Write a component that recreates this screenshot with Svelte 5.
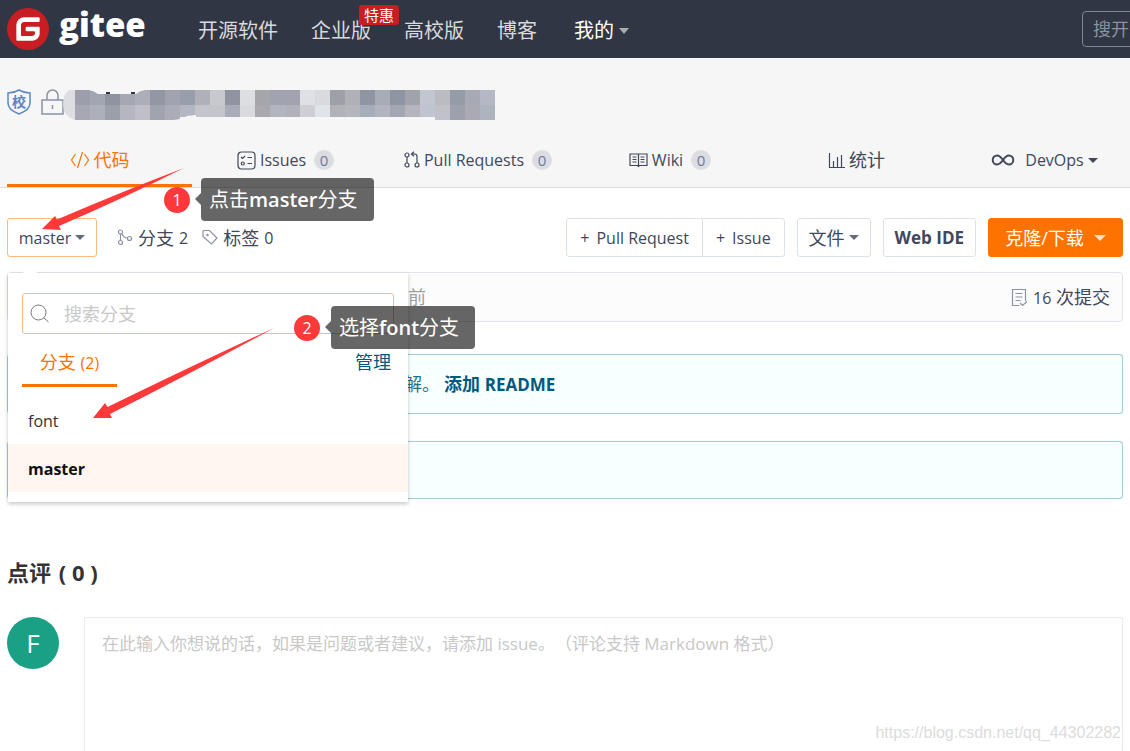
<script lang="ts">
  let branch = $state('master');
  let keyword = $state('');
  let comment = $state('');

  const branches = ['font', 'master'];

  const tabs = [
    { icon: 'code', label: '代码', active: true },
    { icon: 'issues', label: 'Issues', latin: true, count: 0 },
    { icon: 'pulls', label: 'Pull Requests', latin: true, count: 0 },
    { icon: 'wiki', label: 'Wiki', latin: true, count: 0 },
    { icon: 'stats', label: '统计' },
    { icon: 'devops', label: 'DevOps', latin: true, caret: true },
  ];

  // colours of the hidden repository name, one per 15px block
  const mosaic = [
    ['#9c9fab', '#a2a6b2', '#9094a0', '#a5a8b2', '#acaeb8', '#9297a3', '#a1a4af', '#989eab', '#b0b1b8', '#c8c9cf', '#9094a1', '#dddee2', '#a5a6aa', '#a1a4b0', '#a1a4b0', '#dfe0e6', '#d8dadd', '#9da1a7', '#b0b1b7', '#8f95a3', '#a8acb7', '#9095a4', '#a0a3aa', '#c2c6d0', '#babcc1', '#969ba8', '#a7aab4', '#b4b8c4'],
    ['#a6a8b4', '#adafba', '#9b9faa', '#b6b6be', '#c0bfc8', '#a0a4af', '#aaadb8', '#b3b7c2', '#c4c4cc', '#c4c4cb', '#a9acb8', '#d9dade', '#a9a8ad', '#b2b4c0', '#b0b1b9', '#cfced5', '#dfe4e8', '#b0b2b8', '#b5b6bd', '#a6aeb9', '#b2b4bf', '#a3a6b3', '#b6b5bd', '#bfc4d0', '#c0c1c9', '#9da1ad', '#aba9b2', '#adb4c0'],
  ];
</script>

{#snippet icon(name: string)}
  {#if name === 'code'}
    <svg class="icon" width="20" height="18" viewBox="0 0 20 18">
      <path d="M5.500 3 1.500 9l4 6M14.500 3l4 6-4 6M12.500 1 7.500 17" />
    </svg>
  {:else if name === 'issues'}
    <svg class="icon" width="19" height="19" viewBox="0 0 19 19">
      <rect x="1" y="1" width="17" height="17" rx="3.500" />
      <path d="M4 6l1.500 1.500L8 5M10.500 6.500h4.500M10.500 12.500h4.500" />
      <circle cx="5.800" cy="12.500" r="1.500" />
    </svg>
  {:else if name === 'pulls'}
    <svg class="icon" width="16" height="18" viewBox="0 0 16 18">
      <circle cx="3" cy="4" r="2" />
      <circle cx="3" cy="14" r="2" />
      <circle cx="13" cy="14" r="2" />
      <path d="M3 6v6M13 12V5.500Q13 3 10.500 3H8M10 .8 7.500 3 10 5.200" />
    </svg>
  {:else if name === 'wiki'}
    <svg class="icon" width="19" height="16" viewBox="0 0 19 16">
      <path d="M1 2h17v11.500h-7.500l-1 1-1-1H1zM9.500 2v12M3.500 5h4M3.500 7.500h4M3.500 10h4M11.500 5h4M11.500 7.500h4M11.500 10h4" />
    </svg>
  {:else if name === 'stats'}
    <svg class="icon" width="17" height="17" viewBox="0 0 17 17">
      <path d="M1.500 1v14.500H17M5.500 15V9M9.500 15V5M13.500 15V3" />
    </svg>
  {:else if name === 'devops'}
    <svg class="icon thick" width="24" height="14" viewBox="0 0 24 14">
      <path d="M12 7C9.500 3.500 8.500 2.500 6.200 2.500a4.500 4.500 0 0 0 0 9C8.500 11.500 9.500 10.500 12 7s3.500-4.500 5.800-4.500a4.500 4.500 0 0 1 0 9C15.500 11.500 14.500 10.500 12 7z" />
    </svg>
  {:else if name === 'branch'}
    <svg class="icon" width="16" height="17" viewBox="0 0 16 17">
      <circle cx="3.500" cy="3" r="2" />
      <circle cx="3.500" cy="13.500" r="2" />
      <circle cx="12.500" cy="9.500" r="2" />
      <path d="M3.500 5v6.500M4.800 4.700C6 7.500 8 8.800 10.500 9.200" />
    </svg>
  {:else if name === 'tag'}
    <svg class="icon" width="16" height="17" viewBox="0 0 16 17">
      <path d="M1 2.500Q1 1.500 2 1.500h5.500L15 9l-5.500 6L1 7.500z" />
      <circle cx="5.500" cy="6" r=".6" />
    </svg>
  {:else if name === 'commits'}
    <svg class="icon" width="17" height="19" viewBox="0 0 17 19">
      <path d="M8.500 17.500H1.500V1.500h13v11.500M4.500 5.500h7M4.500 9h7M4.500 12.500h5M9 15l2.500 2.500 4.500-4" />
    </svg>
  {/if}
{/snippet}

<div class="page">
  <header class="topbar">
    <a class="logo" href="/" aria-label="gitee">
      <svg width="42" height="42" viewBox="0 0 24 24">
        <circle cx="12" cy="12" r="12" fill="#c71d23" />
        <path
          fill="#fff"
          d="M18.074 5.333c.328 0 .593.266.592.593v1.482a.594.594 0 0 1-.593.592H9.777c-.982 0-1.778.796-1.778 1.778v5.630c0 .327.266.592.593.592h5.630c.982 0 1.778-.796 1.778-1.778v-.296a.593.593 0 0 0-.592-.593h-4.150a.592.592 0 0 1-.592-.592v-1.482a.593.593 0 0 1 .593-.592h6.815c.327 0 .593.265.593.592v3.408a4 4 0 0 1-4 4H5.926a.593.593 0 0 1-.593-.593V9.778a4.444 4.444 0 0 1 4.445-4.444h8.296Z" />
      </svg>
      <span>gitee</span>
    </a>
    <nav class="menu">
      <a href="/explore">开源软件</a>
      <a href="/enterprises">企业版<em>特惠</em></a>
      <a href="/education">高校版</a>
      <a href="/blog">博客</a>
      <a class="mine" href="/mine">我的<i class="caret"></i></a>
    </nav>
    <input class="site-search" type="text" placeholder="搜开源" aria-label="搜开源" />
  </header>

  <section class="project">
    <div class="title">
      <svg width="24" height="26" viewBox="0 0 24 26">
        <path d="M12 1 Q17 4 23 4v10c0 5-4.500 8.500-11 11C5.500 22.500 1 19 1 14V4Q7 4 12 1z" fill="none" stroke="#5f86c4" stroke-width="1.500" />
        <text x="12" y="18" text-anchor="middle">校</text>
      </svg>
      <svg class="lock" width="23" height="26" viewBox="0 0 23 26">
        <path d="M1 11h21v14H1zM6 11V6.500a5.500 5.500 0 0 1 11 0V11M11.500 16v4" fill="none" stroke="#8c92a4" stroke-width="1.500" />
      </svg>
      <svg class="mosaic" width="432" height="30" viewBox="0 0 432 30">
        <path d="M12 0H6Q0 4 0 15t12 15z" fill="#dddee1" />
        {#each mosaic as row, y}
          {#each row as fill, x}
            <rect
              x={12 + x * 15}
              y={y * 15}
              width="15"
              height={y === 1 && x > 6 && x < 24 ? 12 : 15}
              {fill} />
          {/each}
        {/each}
        <path d="M26 0h56q-6 1-9 4H35q-4-3-9-4z" fill="#f6f6f6" />
        <path d="M43 2h4v2h-4zM68 2h4v2h-4z" fill="#303643" />
        <path d="M110 30q10-1 14-4l9-1v5z" fill="#f6f6f6" />
      </svg>
    </div>
    <nav class="tabs">
      {#each tabs as tab}
        <a class:active={tab.active} class:shifted={tab.caret} href="#{tab.icon}">
          {@render icon(tab.icon)}
          <span class:latin={tab.latin}>{tab.label}</span>
          {#if tab.count !== undefined}<b class="count">{tab.count}</b>{/if}
          {#if tab.caret}<i class="caret"></i>{/if}
        </a>
      {/each}
    </nav>
  </section>

  <main>
    <div class="toolbar">
      <div class="picker">
        <button class="btn current latin">{branch}<i class="caret"></i></button>
        <div class="dropdown">
          <label class="search">
            <svg width="20" height="20" viewBox="0 0 20 20" fill="none" stroke="#777">
              <circle cx="8.500" cy="8.500" r="7.500" />
              <path d="M14 14l4.500 4" />
            </svg>
            <input type="text" placeholder="搜索分支" aria-label="搜索分支" bind:value={keyword} />
          </label>
          <div class="dropdown-head">
            <a class="branches" href="#branches">分支 <span class="latin">(2)</span></a>
            <a class="manage" href="#manage">管理</a>
          </div>
          {#each branches as name}
            <button class="option" class:selected={name === branch} onclick={() => (branch = name)}>{name}</button>
          {/each}
        </div>
      </div>
      <a class="stat" href="#branches">{@render icon('branch')}分支 <span class="latin">2</span></a>
      <a class="stat" href="#tags">{@render icon('tag')}标签 <span class="latin">0</span></a>
      <div class="actions">
        <div class="group">
          <button class="btn latin pull"><span>+</span>Pull Request</button>
          <button class="btn latin"><span>+</span>Issue</button>
        </div>
        <button class="btn">文件<i class="caret"></i></button>
        <button class="btn ide">Web IDE</button>
        <button class="btn clone">克隆/下载<i class="caret"></i></button>
      </div>
    </div>

    <div class="commit">
      <span class="time">前</span>
      <a href="#commits">{@render icon('commits')}<span><span class="latin">16</span> 次提交</span></a>
    </div>

    <div class="notice">解。<a href="#readme">添加 <span>README</span></a></div>
    <div class="notice"></div>

    <h3>点评 <span>( 0 )</span></h3>
    <div class="comment">
      <span class="avatar">F</span>
      <div class="editor">
        <textarea
          rows="5"
          aria-label="点评"
          placeholder="在此输入你想说的话，如果是问题或者建议，请添加 issue。（评论支持 Markdown 格式）"
          bind:value={comment}></textarea>
        <span class="watermark">https://blog.csdn.net/qq_44302282</span>
      </div>
    </div>
  </main>

  <!-- walkthrough notes on top of the page -->
  <svg class="arrows" width="300" height="430" viewBox="0 0 300 430">
    <path d="M42 229 55 216 57 219.500Q126 190 184 168 122 199 59 226L61 230z" />
    <path d="M93 418 105 403 107.500 407Q196 364 274 328 190 374 110 414L112 418z" />
  </svg>
  <div class="note first"><b>1</b><p>点击<strong>master</strong>分支</p></div>
  <div class="note second"><b>2</b><p>选择<strong>font</strong>分支</p></div>
</div>

<style>
  :global(body) {
    margin: 0;
    overflow-x: hidden;
  }

  .page {
    position: relative;
    overflow: hidden;
    color: #40485b;
    background: #fff;
    font: 18px/24px "Open Sans", "Noto Sans CJK SC", sans-serif;
  }

  .page *,
  .page {
    box-sizing: border-box;
  }

  a {
    color: inherit;
    text-decoration: none;
  }

  button,
  input,
  textarea {
    font: inherit;
    color: inherit;
  }

  .latin {
    font-size: 16px;
  }

  .icon {
    flex: none;
    fill: none;
    stroke: currentColor;
    stroke-width: 1.2;
  }

  .icon.thick {
    stroke-width: 2;
  }

  .caret {
    display: inline-block;
    flex: none;
    border: 5px solid transparent;
    border-top-color: currentColor;
    border-bottom: 0;
  }

  .topbar {
    display: flex;
    align-items: center;
    height: 58px;
    padding-left: 7px;
    overflow: hidden;
    background: #303643;
  }

  .logo {
    display: flex;
    align-items: center;
    gap: 10px;
    width: 191px;
    color: #fff;
    font-size: 33px;
    font-weight: 800;
    line-height: 42px;
  }

  .logo span {
    padding-bottom: 8px;
  }

  .menu {
    display: flex;
    gap: 33px;
    padding-top: 3px;
    color: #d8dade;
    font-size: 20px;
    line-height: 32px;
    white-space: nowrap;
  }

  .menu a {
    position: relative;
  }

  .menu em {
    position: absolute;
    top: -10px;
    left: 48px;
    padding: 0 5px;
    border-radius: 3px;
    background: #c71d23;
    color: #fff;
    font-size: 15px;
    font-style: normal;
    line-height: 20px;
  }

  .menu .mine {
    display: flex;
    align-items: center;
    gap: 5px;
    margin-left: 4px;
    color: #fff;
  }

  .mine .caret {
    border-width: 6px 5px 0;
    color: #a9acb3;
  }

  .site-search {
    flex: none;
    width: 168px;
    height: 36px;
    margin: 0 -120px 0 auto;
    padding: 0 10px;
    border: 1px solid #7f8697;
    border-radius: 4px;
    background: transparent;
  }

  .site-search::placeholder {
    color: #8c929e;
    opacity: 1;
  }

  .project {
    padding: 30px 7px 0;
    border-bottom: 1px solid #dcdddf;
    background: #f6f6f6;
  }

  .title {
    display: flex;
    align-items: center;
    height: 28px;
  }

  .title text {
    fill: #5f86c4;
    font-size: 14px;
    font-weight: 700;
  }

  .lock {
    margin-left: 10px;
  }

  .mosaic {
    margin-top: 6px;
    margin-left: -1px;
  }

  .tabs {
    display: grid;
    grid-template-columns: 185fr 187fr 198fr 186fr 187fr 173fr;
    margin-top: 18px;
  }

  .tabs a {
    display: flex;
    align-items: center;
    justify-content: center;
    gap: 4px;
    height: 53px;
    padding-top: 2px;
    border-bottom: 3px solid transparent;
    white-space: nowrap;
  }

  .tabs .active {
    border-color: #fe7300;
    color: #fe7300;
  }

  .tabs .shifted {
    padding-left: 16px;
  }

  .shifted .icon {
    margin-right: 6px;
  }

  .count {
    min-width: 20px;
    margin-left: 4px;
    border-radius: 10px;
    background: #dcdde0;
    color: #6c7aa0;
    font-size: 15px;
    font-weight: 400;
    line-height: 20px;
    text-align: center;
  }

  main {
    padding: 30px 7px 0;
  }

  .toolbar {
    display: flex;
    align-items: center;
    white-space: nowrap;
  }

  .picker {
    position: relative;
    margin-right: 20px;
  }

  .btn {
    display: flex;
    align-items: center;
    justify-content: center;
    gap: 4px;
    height: 39px;
    padding: 0 11px;
    border: 1px solid #dce3e8;
    border-radius: 3px;
    background: #fff;
  }

  .btn .caret {
    color: #646b7c;
  }

  .current {
    width: 90px;
    padding: 0;
    border-color: #ffb980;
  }

  .stat {
    display: flex;
    align-items: center;
    gap: 5px;
    margin-right: 14px;
  }

  .stat .icon,
  .commit .icon {
    color: #8c92a4;
  }

  .actions {
    display: flex;
    gap: 12px;
    margin-left: auto;
  }

  .group {
    display: flex;
  }

  .group .btn {
    gap: 7px;
    padding: 0 13px;
    border-radius: 0 3px 3px 0;
  }

  .group .pull {
    margin-right: -1px;
    border-radius: 3px 0 0 3px;
  }

  .ide {
    font-size: 17px;
    font-weight: 700;
  }

  .clone {
    gap: 10px;
    width: 135px;
    border-color: #fe7300;
    background: #fe7300;
    color: #fff;
  }

  .clone .caret {
    border-width: 6px;
    border-bottom: 0;
    color: #ffe0c4;
  }

  .dropdown {
    position: absolute;
    z-index: 1;
    top: 55px;
    left: 1px;
    width: 400px;
    padding: 20px 0 10px;
    background: #fff;
    box-shadow: 0 2px 4px rgba(34, 36, 38, 0.25);
  }

  .dropdown::before {
    content: '';
    position: absolute;
    top: -5px;
    left: 17px;
    width: 10px;
    height: 10px;
    background: #fff;
    transform: rotate(45deg);
  }

  .search {
    display: flex;
    align-items: center;
    height: 41px;
    margin: 0 14px;
    padding-left: 7px;
    border: 1px solid #ffb980;
    border-radius: 3px;
  }

  .search input {
    flex: 1;
    min-width: 0;
    margin-left: 14px;
    padding: 0;
    border: 0;
    outline: 0;
    background: none;
  }

  .search input::placeholder,
  textarea::placeholder {
    color: #c8c8c8;
    opacity: 1;
  }

  .dropdown-head {
    display: flex;
    justify-content: space-between;
    height: 53px;
    margin: 0 14px 9px;
  }

  .branches {
    width: 95px;
    padding-top: 16px;
    border-bottom: 3px solid #fe7300;
    color: #fe7300;
    text-align: center;
  }

  .manage {
    padding: 16px 3px 0;
    color: #005980;
  }

  .option {
    display: block;
    width: 100%;
    height: 48px;
    padding: 2px 20px 0;
    border: 0;
    background: #fff;
    color: #333;
    font-size: 16px;
    text-align: left;
  }

  .selected {
    background: #fff6f1;
    color: #111;
    font-weight: 700;
  }

  .commit {
    display: flex;
    align-items: center;
    justify-content: space-between;
    height: 50px;
    margin-top: 15px;
    padding: 0 12px 0 400px;
    border: 1px solid #dfe5ea;
    border-radius: 4px;
    background: #fcfcfc;
  }

  .time {
    color: #9d9d9d;
  }

  .commit a {
    display: flex;
    align-items: center;
    gap: 5px;
  }

  .notice {
    display: flex;
    align-items: center;
    gap: 4px;
    height: 60px;
    margin-top: 32px;
    padding-left: 396px;
    border: 1px solid #a3cfd8;
    border-radius: 4px;
    background: #f8ffff;
    color: #276f86;
    box-shadow: 0 0 1px #a3cfd8;
  }

  .notice + .notice {
    height: 58px;
    margin-top: 27px;
  }

  .notice a {
    color: #005980;
    font-weight: 700;
  }

  .notice span {
    font-size: 17px;
  }

  h3 {
    margin: 57px 0 29px;
    color: #333;
    font-size: 22px;
    font-weight: 700;
    line-height: 32px;
  }

  h3 span {
    margin-left: 2px;
  }

  .comment {
    display: flex;
    gap: 25px;
  }

  .avatar {
    flex: none;
    width: 52px;
    height: 52px;
    border-radius: 50%;
    background: #1aa085;
    color: #fff;
    font-size: 26px;
    font-weight: 500;
    line-height: 52px;
    text-align: center;
  }

  .editor {
    position: relative;
    flex: 1;
  }

  textarea {
    display: block;
    width: 100%;
    padding: 14px 17px;
    border: 1px solid #eaeaea;
    border-bottom: 0;
    border-radius: 3px 3px 0 0;
    outline: 0;
    font-size: 17px;
    line-height: 24px;
    text-spacing-trim: space-all;
    resize: none;
    overflow: hidden;
  }

  .watermark {
    position: absolute;
    top: 105px;
    right: 2px;
    color: #dcdcdc;
    font: 16px/22px "Liberation Sans", sans-serif;
  }

  .arrows {
    position: absolute;
    z-index: 2;
    top: 0;
    left: 0;
    fill: #fd3a39;
    pointer-events: none;
  }

  .note {
    position: absolute;
    z-index: 3;
    display: flex;
    align-items: center;
    gap: 11px;
    color: #fff;
  }

  .first {
    top: 178px;
    left: 164px;
  }

  .second {
    top: 306px;
    left: 294px;
  }

  .note b {
    width: 26px;
    border-radius: 50%;
    background: #fd3a39;
    font-size: 16px;
    font-weight: 400;
    line-height: 26px;
    text-align: center;
  }

  .note p {
    position: relative;
    height: 43px;
    margin: 0;
    padding: 0 16px 0 8px;
    border-radius: 4px;
    background: rgba(0, 0, 0, 0.6);
    font-size: 20px;
    line-height: 43px;
    white-space: nowrap;
  }

  .note p::before {
    content: '';
    position: absolute;
    top: 15px;
    left: -6px;
    border: 6px solid transparent;
    border-right-color: rgba(0, 0, 0, 0.6);
    border-left: 0;
  }

  .note strong {
    font-weight: 600;
  }
</style>
